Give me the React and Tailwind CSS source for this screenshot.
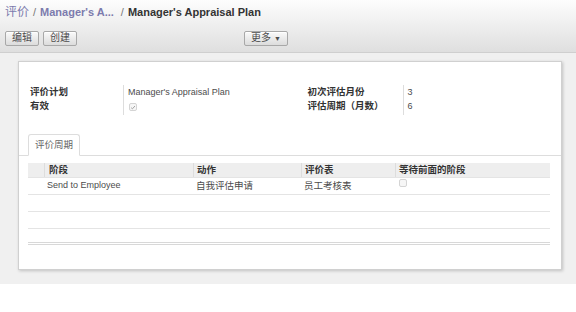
import React from 'react'

const font = { fontFamily: '"Liberation Sans", "Noto Sans CJK SC", sans-serif' }

function Btn({ children }) {
  return (
    <button className="flex h-[15px] items-center rounded-[2px] border border-[#a8a8a8] bg-gradient-to-b from-[#fafafa] to-[#dcdcdc] px-[6px] text-[10px] leading-none text-[#4c4c4c] shadow-[inset_0_1px_0_#fff]">
      {children}
    </button>
  )
}

function Check({ checked }) {
  return (
    <span className="inline-flex h-[8px] w-[8px] items-center justify-center rounded-[2px] border border-[#d4d4d4] bg-[#f6f6f6]">
      {checked && (
        <svg viewBox="0 0 8 8" className="h-[7px] w-[7px]">
          <path d="M1.5 4.2 L3.2 5.8 L6.6 2" fill="none" stroke="#9a9a9a" strokeWidth="1.2" />
        </svg>
      )}
    </span>
  )
}

function Field({ label }) {
  return (
    <div className="flex h-[14px] items-center font-bold text-[#333]">{label}</div>
  )
}

const rows = [
  { stage: 'Send to Employee', action: '自我评估申请', form: '员工考核表' },
]

export default function App() {
  return (
    <div style={font} className="h-[312px] w-[576px] overflow-hidden bg-white text-[#4c4c4c]">
      <header className="h-[53px] border-b border-[#cfcfcf] bg-gradient-to-b from-[#fdfdfd] to-[#dfdfdf] px-[5px] pt-[3px]">
        <div className="flex h-[18px] items-center gap-[4px] text-[11px]">
          <span className="text-[12px] text-[#7c7bad]">评价</span>
          <span className="text-[#777]">/</span>
          <span className="font-bold text-[#7c7bad]">Manager's A...</span>
          <span className="ml-[3px] text-[#777]">/</span>
          <span className="font-bold text-[#333]">Manager's Appraisal Plan</span>
        </div>
        <div className="mt-[9px] flex h-[16px] items-center">
          <div className="flex gap-[4px]">
            <Btn>编辑</Btn>
            <Btn>创建</Btn>
          </div>
          <div className="ml-[167px]">
            <Btn>
              更多
              <span className="ml-[3px] text-[7px]">▼</span>
            </Btn>
          </div>
        </div>
      </header>

      <div className="h-[231px] bg-[#f0f0f0] pl-[18px] pr-[14px] pt-[8px]">
        <div className="h-[209px] border border-[#d0d0d0] bg-white shadow-[1px_1px_3px_rgba(0,0,0,0.2)]">
          <div className="grid grid-cols-2 pl-[11px] pt-[23px] text-[9.5px]">
            <div className="flex">
              <div className="w-[93px]">
                <Field label="评价计划" />
                <Field label="有效" />
              </div>
              <div className="border-l border-[#ddd] py-[1px] pl-[4px] text-[9px]">
                <div className="flex h-[14px] items-center">Manager's Appraisal Plan</div>
                <div className="flex h-[14px] items-center pl-[1px]">
                  <Check checked />
                </div>
              </div>
            </div>
            <div className="flex pl-[12px]">
              <div className="w-[95px]">
                <Field label="初次评估月份" />
                <Field label="评估周期（月数）" />
              </div>
              <div className="border-l border-[#ddd] py-[1px] pl-[4px] text-[9px]">
                <div className="flex h-[14px] items-center">3</div>
                <div className="flex h-[14px] items-center">6</div>
              </div>
            </div>
          </div>

          <div className="mt-[19px] flex border-b border-[#ddd] pl-[9px]">
            <div className="-mb-px flex h-[22px] items-center rounded-t-[3px] border border-[#ddd] border-b-white bg-white px-[6px] text-[9.5px] text-[#666]">
              评价周期
            </div>
          </div>

          <div className="ml-[9px] mr-[11px] mt-[7px] text-[9.5px]">
            <div className="flex h-[15px] items-center border-b border-[#e4e4e4] bg-[#eeeeee] font-bold text-[#333]">
              <div className="h-full w-[16px]" />
              <div className="flex h-full w-[149px] items-center border-l border-[#ddd] pl-[4px]">阶段</div>
              <div className="flex h-full w-[108px] items-center border-l border-[#ddd] pl-[3px]">动作</div>
              <div className="flex h-full w-[94px] items-center border-l border-[#ddd] pl-[3px]">评价表</div>
              <div className="flex h-full flex-1 items-center border-l border-[#ddd] pl-[3px]">等待前面的阶段</div>
            </div>
            {rows.map((r) => (
              <div key={r.stage} className="flex h-[17px] items-center border-b border-[#e4e4e4]">
                <div className="w-[19px]" />
                <div className="w-[149px] text-[9px]">{r.stage}</div>
                <div className="w-[108px]">{r.action}</div>
                <div className="w-[95px]">{r.form}</div>
                <div className="flex-1 pb-[4px]">
                  <Check />
                </div>
              </div>
            ))}
            <div className="h-[17px] border-b border-[#e4e4e4]" />
            <div className="h-[17px] border-b border-[#e4e4e4]" />
            <div className="h-[16px] border-b-[3px] border-double border-[#d8d8d8]" />
          </div>
        </div>
      </div>
    </div>
  )
}
